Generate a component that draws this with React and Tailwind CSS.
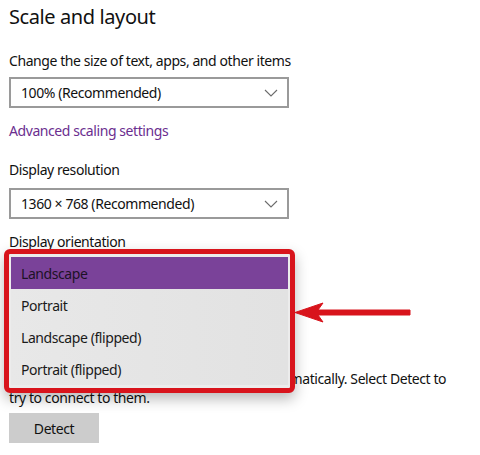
const font = { fontFamily: '"Noto Sans", "Open Sans", sans-serif' }

function Chevron() {
  return (
    <svg width="14" height="8" viewBox="0 0 14 8" className="shrink-0">
      <path d="M1 1 L7 7 L13 1" fill="none" stroke="#6b6b6b" strokeWidth="1.1" />
    </svg>
  )
}

function Select({ value, className = '' }) {
  return (
    <div
      className={`flex h-[31px] w-[280px] items-center justify-between border-2 border-[#9a9a9a] bg-white pl-[10px] pr-[9px] text-[14px] tracking-[-0.42px] text-[#111] ${className}`}
    >
      <span>{value}</span>
      <Chevron />
    </div>
  )
}

const orientations = ['Landscape', 'Portrait', 'Landscape (flipped)', 'Portrait (flipped)']

function OrientationMenu() {
  return (
    <div className="absolute left-[4px] top-[249px] w-[291px] rounded-[6px] border-[5px] border-[#d8141c] bg-[#ececec] shadow-[0_6px_14px_rgba(0,0,0,0.28)]">
      <ul className="flex flex-col px-[2px] py-[3px]">
        {orientations.map((item, index) => (
          <li
            key={item}
            className={`flex h-[32px] items-center pl-[10px] text-[14px] tracking-[-0.42px] ${
              index === 0
                ? 'bg-[#7a4299] text-[#1d1226]'
                : 'bg-gradient-to-r from-[#e8e8e8] to-[#e2e2e2] text-[#1a1a1a]'
            }`}
          >
            {item}
          </li>
        ))}
      </ul>
    </div>
  )
}

function PointerArrow() {
  return (
    <svg
      className="absolute left-[292px] top-[300px]"
      width="122"
      height="26"
      viewBox="0 0 122 26"
    >
      <polygon
        points="3,12.5 31,3 26,10 118,10 118,15 26,15 31,22"
        fill="#d8141c"
        stroke="#d8141c"
        strokeWidth="1"
        strokeLinejoin="round"
      />
    </svg>
  )
}

export default function App() {
  return (
    <div className="relative h-[455px] w-[480px] overflow-hidden bg-white" style={font}>
      <div className="flex flex-col px-[9px] pt-[2px] text-[#111]">
        <h1 className="text-[20px] leading-[30px] tracking-[-0.4px] text-[#111]">
          Scale and layout
        </h1>

        <div className="flex flex-col text-[14px] tracking-[-0.42px]">
          <p className="mt-[19px] leading-[20px]">
            Change the size of text, apps, and other items
          </p>
          <Select value="100% (Recommended)" className="mt-[6px]" />

          <a className="mt-[13px] leading-[20px] text-[#6b2e8f]" href="#">
            Advanced scaling settings
          </a>

          <p className="mt-[19px] leading-[20px]">Display resolution</p>
          <Select value="1360 × 768 (Recommended)" className="mt-[8px]" />

          <p className="mt-[13px] leading-[20px]">Display orientation</p>
          <Select value="Landscape" className="mt-[7px]" />

          <h2 className="mt-[24px] text-[20px] leading-[28px] tracking-[-0.4px]">
            Multiple displays
          </h2>

          <p className="mt-[27px] w-[450px] leading-[19px]">
            Older displays might not always connect automatically. Select Detect to try to
            connect to them.
          </p>

          <button
            type="button"
            className="mt-[6px] h-[30px] w-[90px] bg-[#cccccc] text-[#111]"
          >
            Detect
          </button>
        </div>
      </div>

      <OrientationMenu />
      <PointerArrow />
    </div>
  )
}
